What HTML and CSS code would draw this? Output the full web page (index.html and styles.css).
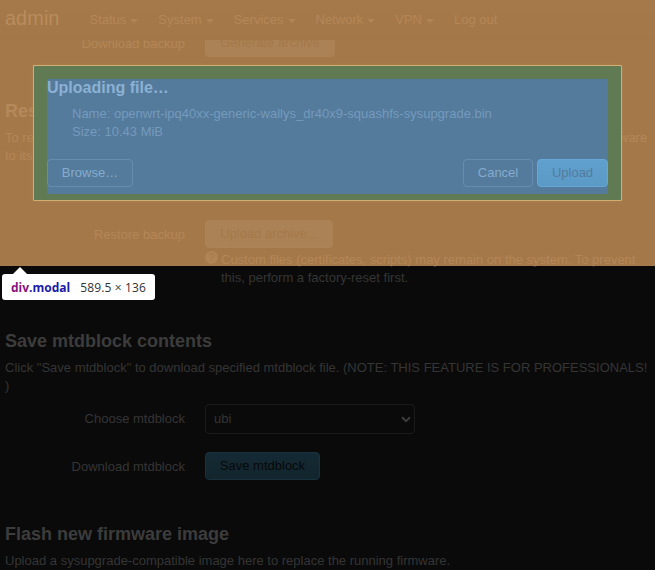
FILE: index.html
```html
<!DOCTYPE html>
<html lang="en">
<head>
<meta charset="utf-8">
<title>Flash operations</title>
<link rel="stylesheet" href="styles.css">
</head>
<body>
<header class="topbar">
  <a class="brand">admin</a>
  <nav class="nav">
    <a class="menu">Status</a><a class="menu">System</a><a class="menu">Services</a><a class="menu">Network</a><a class="menu">VPN</a><a>Log out</a>
  </nav>
</header>
<main class="page">
  <section class="backup">
    <div class="row"><label>Download backup</label><div><button class="btn w130">Generate archive</button></div></div>
  </section>
  <section class="restore">
    <h3>Restore</h3>
    <p>To restore configuration files, you can upload a previously generated backup archive here. To reset the firmware to its initial state, click "Perform reset" (only possible with squashfs images).</p>
    <div class="row"><label>Reset to defaults</label><div><button class="btn w106">Perform reset</button></div></div>
    <div class="row"><label>Restore backup</label><div><button class="btn w128">Upload archive...</button>
      <div class="hint"><i>?</i><span>Custom files (certificates, scripts) may remain on the system. To prevent this, perform a factory-reset first.</span></div></div></div>
  </section>
  <section class="mtd">
    <h3>Save mtdblock contents</h3>
    <p>Click "Save mtdblock" to download specified mtdblock file. (NOTE: THIS FEATURE IS FOR PROFESSIONALS! )</p>
    <div class="row"><label>Choose mtdblock</label><div class="select"><span>ubi</span><svg width="10" height="7" viewBox="0 0 10 7"><path d="M1 1.2 L5 5.2 L9 1.2"/></svg></div></div>
    <div class="row"><label>Download mtdblock</label><div><button class="btn save">Save mtdblock</button></div></div>
  </section>
  <section class="flash">
    <h3>Flash new firmware image</h3>
    <p>Upload a sysupgrade-compatible image here to replace the running firmware.</p>
  </section>
</main>
<div class="modal">
  <h4>Uploading file…</h4>
  <ul><li>Name: openwrt-ipq40xx-generic-wallys_dr40x9-squashfs-sysupgrade.bin</li><li>Size: 10.43 MiB</li></ul>
  <div class="actions"><button class="mbtn browse">Browse…</button><button class="mbtn cancel">Cancel</button><button class="mbtn upload">Upload</button></div>
</div>
<div class="hl-margin"></div>
<div class="hl-padding"></div>
<div class="tip"><b class="tag">div</b><b class="cls">.modal</b><span>589.5 × 136</span></div>
</body>
</html>
```
FILE: styles.css
```css
* { box-sizing: border-box; }
body {
  margin: 0;
  height: 570px;
  overflow: hidden;
  position: relative;
  background: #0a0a0a;
  color: #353535;
  font: 13px/18px "Liberation Sans", Arial, sans-serif;
}
h3, h4, p, ul { margin: 0; padding: 0; }
button { font: inherit; padding: 0; display: block; }

.topbar {
  position: absolute;
  inset: 0 0 auto 0;
  z-index: 1;
  height: 40px;
  padding: 0 5px;
  display: flex;
  align-items: center;
  background: linear-gradient(#0d0d0d, #080808);
  color: #353535;
}
.brand { width: 84.5px; font-size: 20px; line-height: 36px; padding-bottom: 4px; color: #444; }
.nav { display: flex; gap: 20px; }
.menu::after {
  content: "";
  display: inline-block;
  vertical-align: middle;
  margin-left: 4px;
  border: 4px solid transparent;
  border-top-color: #303030;
  border-bottom: 0;
}

.page { padding: 29px 5px 0; }
section { height: 193px; }
.backup { height: 64px; }
.restore { height: 230px; }
.flash { height: 54px; }
h3 { font-size: 18px; line-height: 37px; height: 36px; color: #3c3c3c; }
.row { display: grid; grid-template-columns: 180px 1fr; column-gap: 20px; margin-bottom: 18px; }
.row label { text-align: right; line-height: 30px; height: 28px; }
.restore .row { margin-bottom: 19px; }
.restore p { margin-bottom: 8px; }
.mtd p { margin-bottom: 9px; }
.btn {
  height: 28px;
  border: 1px solid #202a2c;
  border-radius: 4px;
  background: #18272d;
  color: #090909;
}
.w130 { width: 130px; }
.w106 { width: 106px; }
.w128 { width: 128px; }
.save { width: 115px; background: linear-gradient(#142a34, #12252d); border-color: #17323d; }
.hint { display: flex; margin-top: 3px; }
.hint i {
  flex: none;
  width: 13px;
  height: 13px;
  margin: 0 3px 0 0;
  border-radius: 50%;
  background: #2c2c2c;
  color: #0a0a0a;
  font: 11px/13px "Liberation Sans", sans-serif;
  text-align: center;
}
.select {
  width: 210px;
  height: 30px;
  padding: 0 3px 0 8px;
  display: flex;
  align-items: center;
  justify-content: space-between;
  border: 1px solid #1b1b1b;
  border-radius: 4px;
}
.select svg { fill: none; stroke: #3d3d3d; stroke-width: 2; }

.modal {
  position: absolute;
  z-index: 2;
  left: 33px;
  top: 65px;
  width: 589px;
  height: 136px;
  padding: 13px 13px 0;
  border: 1px solid #808080;
  border-radius: 2px;
  background: #222;
  color: #808080;
  box-shadow: 0 0 3px #222;
}
h4 { font-size: 16px; line-height: 18px; color: #c0c0c0; }
ul { list-style: none; margin: 8px 0 18px 25px; }
.actions { display: flex; }
.mbtn { height: 28px; border: 1px solid #555; border-radius: 4px; background: transparent; color: #b0b0b0; }
.browse { width: 86px; margin-right: auto; }
.cancel { width: 70px; margin-right: 4px; }
.upload { width: 71px; background: linear-gradient(#4490b4, #367e9a); border-color: #50a8d0; color: #222; }

.hl-margin, .hl-padding { position: absolute; z-index: 3; border-style: solid; }
.hl-margin { inset: 0 0 auto 0; height: 266px; border-width: 65px 33px; border-color: rgba(246, 178, 107, .66); }
.hl-padding {
  left: 33px;
  top: 65px;
  width: 589px;
  height: 136px;
  padding: 0;
  border: 14px solid rgba(147, 196, 125, .55);
  border-bottom-width: 7px;
  background: rgba(111, 168, 220, .66) padding-box;
}
.hl-padding::after { content: ""; position: absolute; inset: -14px -14px -7px; border: 1px solid rgba(246, 178, 107, .66); }
.tip {
  position: absolute;
  z-index: 4;
  left: 2px;
  top: 274px;
  width: 153px;
  height: 26px;
  padding: 0 9px;
  display: flex;
  align-items: center;
  border-radius: 3px;
  background: #fff;
  color: #333;
  font: 12px/26px "Open Sans", "Noto Sans", sans-serif;
  white-space: pre;
}
.tip > * { padding-top: 1px; }
.tip::before {
  content: "";
  position: absolute;
  left: 11px;
  top: -7px;
  border: 7.5px solid transparent;
  border-top: 0;
  border-bottom: 7px solid #fff;
}
.tag { color: #881280; }
.cls { color: #1a1aa6; }
.tip span { margin-left: auto; letter-spacing: .14px; }
```
